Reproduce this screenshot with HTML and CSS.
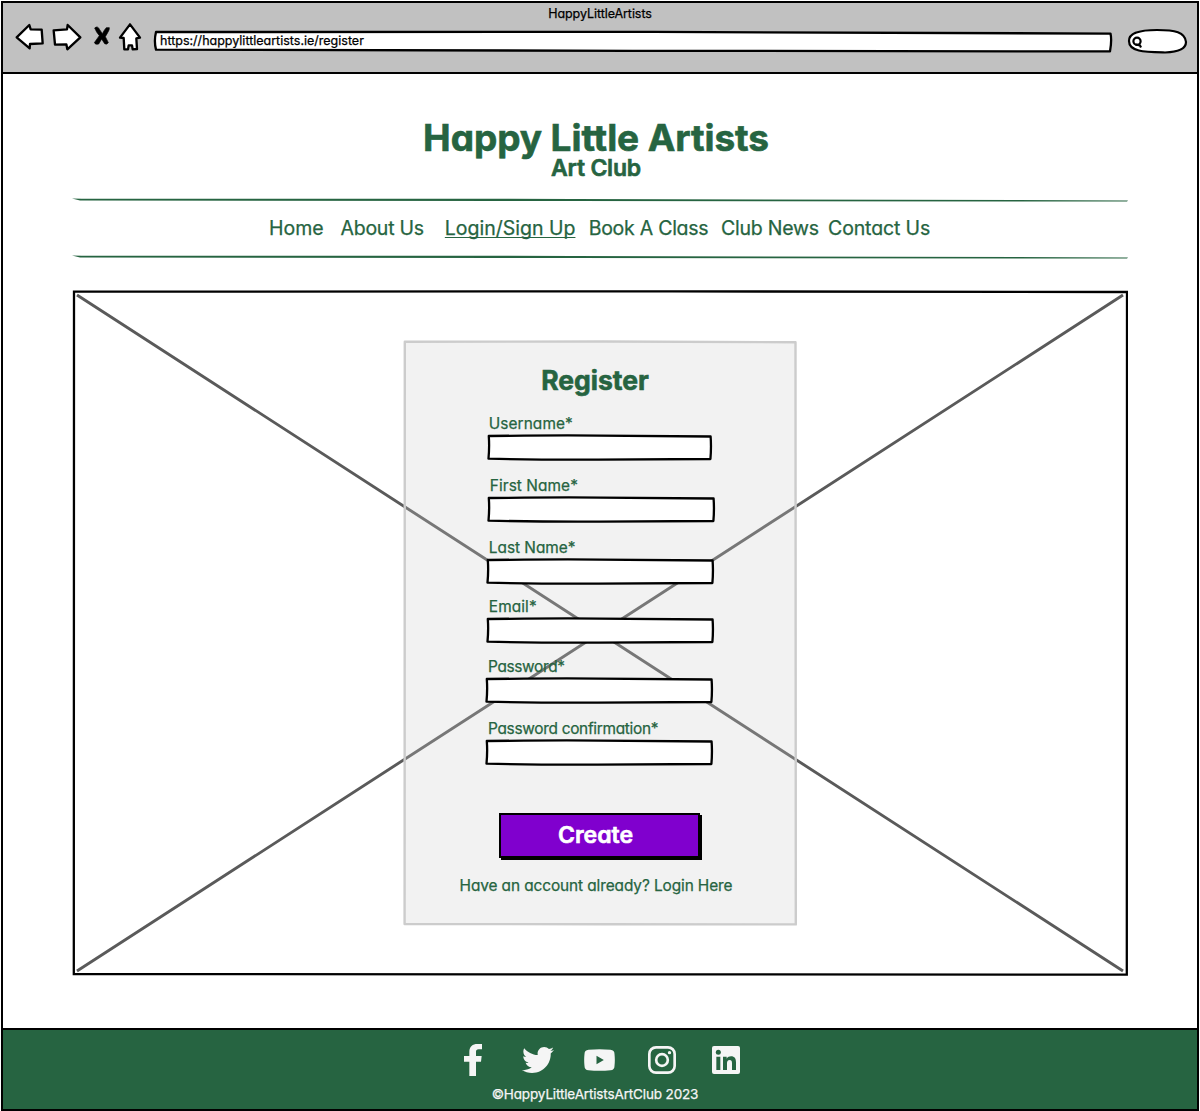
FILE: index.html
```html
<!DOCTYPE html>
<html lang="en">
<head>
<meta charset="utf-8">
<title>HappyLittleArtists</title>
<link rel="stylesheet" href="styles.css">
</head>
<body>
<svg class="defs" aria-hidden="true">
  <symbol id="field-box" viewBox="0 0 228 27" preserveAspectRatio="none">
    <path d="M1.8 2 Q70 1.2 113 1.6 T225.6 2.5 Q226.4 13 225.4 25 Q170 25.3 112 25.6 T1.5 24.6 Q2.6 13 1.8 2Z" fill="#fff" stroke="#000" stroke-width="2.3" stroke-linejoin="round"/>
  </symbol>
  <symbol id="rule" viewBox="0 0 1056 5">
    <path d="M0 .6 L10 .7 L500 .9 L1056 2.4 L1055 3.5 L1040 3.6 L500 3 L8 2.5Z" fill="#266441"/>
  </symbol>
</svg>
<div class="window">
  <div class="toolbar">
    <div class="window-title">HappyLittleArtists</div>
    <div class="toolbar-row">
      <svg class="nav-icons" viewBox="36 60 396 102">
        <g fill="#fff" stroke="#000" stroke-width="7" stroke-linejoin="round">
          <path d="M50 112 L88 75 L92 88 L125 89 L128 130 L90 132 L89 145Z"/>
          <path d="M161 91 L201 88 L203 75 L241 112 L202 148 L199 133 L165 134Z"/>
          <path d="M390 73 L420 113 L409 115 L411 147 L398 148 L396 136 L386 136 L384 148 L373 148 L371 114 L360 113Z"/>
        </g>
        <path d="M284 84 Q293 76 299 89 L307 101 Q314 88 319 83 L328 83 Q329 89 323 98 L316 110 L325 128 Q320 135 314 131 L305 117 L296 132 Q286 135 283 128 L298 107 Q289 97 284 84Z" stroke="#000" stroke-width="2"/>
      </svg>
      <div class="address">
        <svg class="backdrop" viewBox="0 0 960 23" preserveAspectRatio="none"><path d="M3 2 L500 1.9 L957.5 3.6 Q959 10 957 21.4 L480 20.8 L3 19.6 Q.8 11 3 2Z" fill="#fff" stroke="#000" stroke-width="2.3" stroke-linejoin="round"/></svg>
        <span class="url">https://happylittleartists.ie/register</span>
      </div>
      <svg class="search" viewBox="0 0 61 26"><path d="M2 13 C2 6 10 2 30 2 C48 2 58 4 59 14 C59 21 52 24 38 24.5 C18 24 2 24 2 13Z" fill="#fff" stroke="#000" stroke-width="2.2"/><circle cx="10" cy="13.2" r="3.6" fill="none" stroke="#000" stroke-width="2.2"/><path d="M8.5 16.5 L13 17.5 L14 19.5" fill="none" stroke="#000" stroke-width="2.2"/></svg>
    </div>
  </div>
  <header class="site-header">
    <h1>Happy Little Artists</h1>
    <p class="tagline">Art Club</p>
  </header>
  <svg class="rule"><use href="#rule"/></svg>
  <nav class="site-nav">
    <a class="home">Home</a>
    <a class="about">About Us</a>
    <a class="login">Login/Sign Up</a>
    <a class="book">Book A Class</a>
    <a class="news">Club News</a>
    <a class="contact">Contact Us</a>
  </nav>
  <svg class="rule"><use href="#rule"/></svg>
  <main class="hero">
    <svg class="backdrop" viewBox="0 0 1056 686"><path d="M2 1.6 L600 1.4 L1055 2 L1054.8 684.6 L500 684.4 L1.8 684Z" fill="#fff" stroke="#000" stroke-width="2.3"/><path d="M5 5 L1051 681 M1051 5 L5 681" stroke="#5a5a5a" stroke-width="2.9" fill="none"/></svg>
    <form class="card">
      <svg class="backdrop" viewBox="0 0 394 586"><path d="M1.8 1.8 L200 1.5 L392.5 2.3 L392.8 584.4 L200 584.2 L1.6 584Z" fill="#cbcbcb" fill-opacity=".26" stroke="#ccc" stroke-width="2.4" stroke-linejoin="round"/></svg>
      <h2>Register</h2>
      <div class="field username"><label>Username*</label><svg><use href="#field-box"/></svg></div>
      <div class="field first-name"><label>First Name*</label><svg><use href="#field-box"/></svg></div>
      <div class="field last-name"><label>Last Name*</label><svg><use href="#field-box"/></svg></div>
      <div class="field email"><label>Email*</label><svg><use href="#field-box"/></svg></div>
      <div class="field password"><label>Password*</label><svg><use href="#field-box"/></svg></div>
      <div class="field confirm"><label>Password confirmation*</label><svg><use href="#field-box"/></svg></div>
      <button type="button" class="create">Create</button>
      <p class="hint">Have an account already? Login Here</p>
    </form>
  </main>
  <footer class="site-footer">
    <div class="social">
      <svg class="facebook" viewBox="0 0 54 96"><path d="M16 96V53H0V36H16V24C16 8 26 0 40 0H54V16H44C38 16 36 19 36 24V36H53L51 53H36V96Z"/></svg>
      <svg class="twitter" viewBox="0 0 512 512"><path d="M459.37 151.716c.325 4.548.325 9.097.325 13.645 0 138.72-105.583 298.558-298.558 298.558-59.452 0-114.68-17.219-161.137-47.106 8.447.974 16.568 1.299 25.34 1.299 49.055 0 94.213-16.568 130.274-44.832-46.132-.975-84.792-31.188-98.112-72.772 6.498.974 12.995 1.624 19.818 1.624 9.421 0 18.843-1.3 27.614-3.573-48.081-9.747-84.143-51.98-84.143-102.985v-1.299c13.969 7.797 30.214 12.67 47.431 13.319-28.264-18.843-46.781-51.005-46.781-87.391 0-19.492 5.197-37.36 14.294-52.954 51.655 63.675 129.3 105.258 216.365 109.807-1.624-7.797-2.599-15.918-2.599-24.04 0-57.828 46.782-104.934 104.934-104.934 30.213 0 57.502 12.67 76.67 33.137 23.715-4.548 46.456-13.32 66.599-25.34-7.798 24.366-24.366 44.833-46.132 57.827 21.117-2.273 41.584-8.122 60.426-16.243-14.292 20.791-32.161 39.308-52.628 54.253z"/></svg>
      <svg class="youtube" viewBox="0 0 92 66"><path fill-rule="evenodd" d="M13 2 Q46 -1 79 2 Q91 3 91 15 Q93 33 91 51 Q91 63 79 64 Q46 67 13 64 Q1 63 1 51 Q-1 33 1 15 Q1 3 13 2Z M37 20V46L59 33Z"/></svg>
      <svg class="instagram" viewBox="0 0 84 84"><rect x="4" y="4" width="76" height="76" rx="20" fill="none" stroke="#f5f5f5" stroke-width="8"/><circle cx="42" cy="42" r="17.5" fill="none" stroke="#f5f5f5" stroke-width="8"/><circle cx="64.5" cy="20" r="5"/></svg>
      <svg class="linkedin" viewBox="0 0 84 84"><rect width="84" height="84" rx="6"/><g fill="#266441"><circle cx="19" cy="19" r="7.5"/><path d="M13 32H25V72H13ZM33 32H44V38C47 33 52 31 57 31C68 31 72 38 72 49V72H60V52C60 45 58 42 53 42C47 42 45 46 45 52V72H33Z"/></g></svg>
    </div>
    <p class="copyright">©HappyLittleArtistsArtClub 2023</p>
  </footer>
</div>
</body>
</html>
```
FILE: styles.css
```css
* { box-sizing: border-box; }
body {
  margin: 0;
  background: #fff;
  color: #266441;
  font-family: Inter, "Open Sans", sans-serif;
  font-feature-settings: "cv11";
  -webkit-text-stroke: .25px currentColor;
  white-space: nowrap;
}
h1, h2, p { margin: 0; }
.defs { position: absolute; width: 0; height: 0; }
.backdrop { position: absolute; inset: 0; width: 100%; height: 100%; }
.window {
  display: flex;
  flex-direction: column;
  width: 1198px;
  height: 1110px;
  margin: 1px 1px 0;
  border: 2px solid #000;
  border-left-width: 2.5px;
  overflow: hidden;
}
.toolbar {
  flex: none;
  height: 71px;
  background: #c1c1c1;
  border-bottom: 2px solid #000;
  color: #000;
}
.window-title { height: 20px; font-size: 12.5px; line-height: 21px; letter-spacing: -.06px; text-align: center; }
.toolbar-row { display: flex; align-items: flex-start; }
.nav-icons { width: 132px; height: 34px; margin: -3px 0 0 9px; }
.address { position: relative; width: 960px; height: 23px; margin: 7px 0 0 9px; padding-left: 7px; font-size: 12.5px; line-height: 21px; }
.url { position: relative; }
.search { width: 61px; height: 26px; margin: 5px 0 0 14px; }
.site-header { flex: none; height: 124px; padding: 40px 8px 0 0; text-align: center; }
h1 { font-size: 37px; line-height: 48px; font-weight: 700; letter-spacing: -.08px; -webkit-text-stroke-width: .6px; }
.tagline { font-size: 23px; line-height: 30px; font-weight: 600; letter-spacing: -.22px; margin-top: -9px; -webkit-text-stroke-width: .6px; }
.rule { flex: none; width: 1056px; height: 5px; margin-left: 69px; }
.site-nav { flex: none; display: flex; height: 52px; padding: 12px 0 0 266px; font-size: 19.5px; line-height: 26px; }
.about { margin-left: 16.9px; letter-spacing: -.25px; }
.login { margin-left: 21px; text-decoration: underline; text-decoration-thickness: 1px; text-underline-offset: 2px; text-decoration-skip-ink: none; }
.book { margin-left: 13.2px; letter-spacing: -.25px; }
.news { margin-left: 12.7px; letter-spacing: -.25px; }
.contact { margin-left: 9.3px; letter-spacing: -.13px; }
.hero { flex: none; position: relative; width: 1056px; height: 686px; margin: 30px 0 0 69px; padding: 50px 0 0 331px; }
.card { position: relative; width: 394px; height: 586px; padding-top: 23px; }
.card > * { position: relative; }
.card > .backdrop { position: absolute; }
h2 { font-size: 26.5px; line-height: 34px; font-weight: 700; text-align: center; margin: 0 10px 16px 0; -webkit-text-stroke-width: .6px; }
.field { height: 48px; margin: 0 0 14px 83px; }
.field label { display: block; height: 21px; padding: 1px 0 0 2.8px; font-size: 15.4px; line-height: 20px; }
.field svg { display: block; width: 228px; height: 27px; }
.username label { letter-spacing: .08px; }
.username svg { width: 226px; margin-left: 1px; }
.first-name label { padding-left: 3.8px; letter-spacing: .08px; }
.first-name svg { width: 229px; margin-left: .6px; }
.last-name { margin-bottom: 11px; }
.last-name label { letter-spacing: -.02px; }
.last-name svg, .email svg { width: 229px; margin-left: -.4px; }
.email { margin-bottom: 12px; }
.email label { letter-spacing: .1px; }
.password label { padding-left: 2px; letter-spacing: -.33px; }
.confirm label { padding-left: 2px; letter-spacing: -.29px; }
.password svg, .confirm svg { width: 229px; margin-left: -1.3px; }
.create {
  display: block;
  width: 201px;
  height: 45px;
  margin: 47px 0 0 96px;
  padding: 0 8px 1px 0;
  border: 2px solid #000;
  background: #8000ce;
  box-shadow: 2px 2px 0 #000;
  color: #fff;
  font: 600 23px/40px Inter, "Open Sans", sans-serif;
  font-feature-settings: "cv11";
  -webkit-text-stroke: .6px #fff;
}
.hint { margin: 18px 8px 0 0; font-size: 15.4px; line-height: 20px; letter-spacing: -.09px; text-align: center; }
.site-footer { flex: none; margin-top: auto; height: 81px; background: #266441; border-top: 2px solid #000; color: #f5f5f5; }
.social { display: flex; align-items: center; height: 32px; margin: 14px 0 0 461px; }
.social svg { fill: #f5f5f5; flex: none; }
.facebook { width: 18px; height: 32px; }
.twitter { width: 32px; height: 32px; margin-left: 40px; }
.youtube { width: 31px; height: 22px; margin-left: 30px; }
.instagram { width: 28px; height: 28px; margin-left: 33px; }
.linkedin { width: 28px; height: 28px; margin-left: 36px; }
.copyright { font-size: 13.5px; line-height: 18px; letter-spacing: -.14px; margin: 9px 10px 0 0; text-align: center; }
```
